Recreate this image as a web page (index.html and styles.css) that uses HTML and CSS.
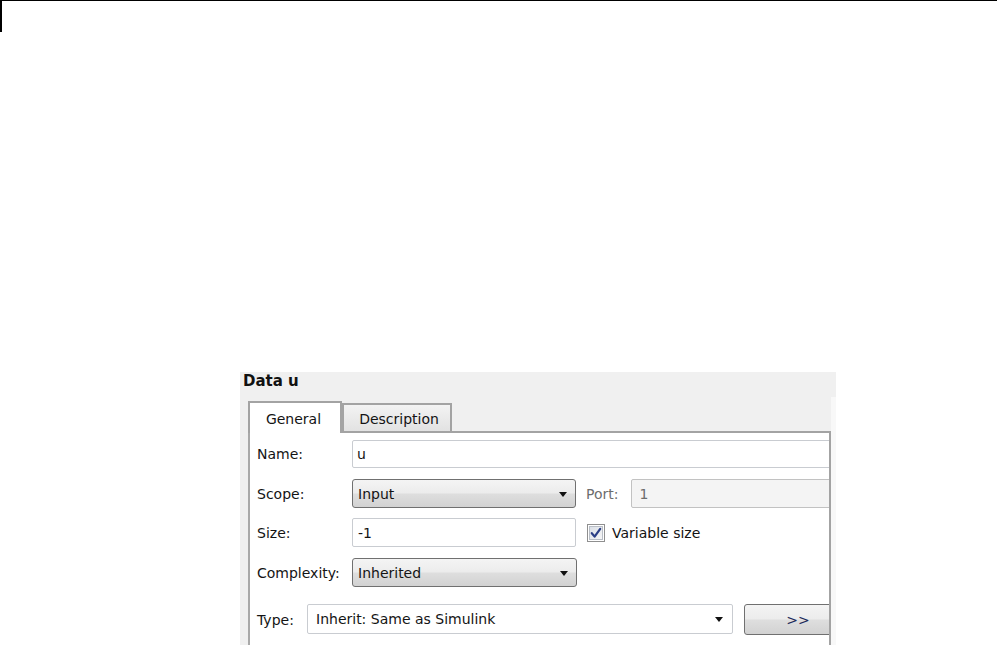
FILE: index.html
```html
<!DOCTYPE html>
<html>
<head>
<meta charset="utf-8">
<link rel="stylesheet" href="styles.css">
</head>
<body>
<div class="frame"></div>
<div class="dialog">
  <div class="title">Data u</div>
  <div class="content">
    <div class="main">
      <div class="tabs">
        <div class="tab active">General</div>
        <div class="tab">Description</div>
      </div>
      <div class="pane">
        <div class="row r-name">
          <span class="label">Name:</span>
          <div class="input wide">u</div>
        </div>
        <div class="row r-scope">
          <span class="label">Scope:</span>
          <div class="select">Input<span class="arrow"></span></div>
          <span class="port-label">Port:</span>
          <div class="input disabled">1</div>
        </div>
        <div class="row r-size">
          <span class="label">Size:</span>
          <div class="input short">-1</div>
          <svg class="check" width="18" height="18" viewBox="0 0 18 18">
            <defs>
              <linearGradient id="cb" x1="0" y1="0" x2="1" y2="1">
                <stop offset="0" stop-color="#d9dee6"/>
                <stop offset="1" stop-color="#f7f7f7"/>
              </linearGradient>
            </defs>
            <rect x="0.5" y="0.5" width="17" height="17" fill="#fff" stroke="#8f8f8f"/>
            <rect x="2.5" y="2.5" width="13" height="13" fill="url(#cb)" stroke="#b9bec6"/>
            <path d="M4.8 9.2 L7.6 12.6 L13.2 4.8" fill="none" stroke="#2b3f86" stroke-width="2.2" stroke-linejoin="round" stroke-linecap="round"/>
          </svg>
          <span class="check-label">Variable size</span>
        </div>
        <div class="row r-complex">
          <span class="label">Complexity:</span>
          <div class="select">Inherited<span class="arrow"></span></div>
        </div>
        <div class="row r-type">
          <span class="label type-label">Type:</span>
          <div class="combo">Inherit: Same as Simulink<span class="arrow"></span></div>
          <div class="button">&gt;&gt;</div>
        </div>
      </div>
    </div>
    <div class="strip"></div>
  </div>
</div>
</body>
</html>
```
FILE: styles.css
```css
html, body {
  margin: 0;
  padding: 0;
  background: #ffffff;
}
body {
  width: 997px;
  height: 645px;
  overflow: hidden;
  font-family: "DejaVu Sans", Verdana, sans-serif;
  font-size: 14px;
  color: #141414;
}
.frame {
  height: 31px;
  border-top: 1px solid #000;
  border-left: 2px solid #000;
}
.dialog {
  margin: 340px 0 0 240px;
  width: 596px;
  height: 273px;
  background: #f0f0f0;
  display: flex;
  flex-direction: column;
  overflow: hidden;
}
.title {
  height: 25px;
  padding-left: 3px;
  font-weight: bold;
  font-size: 15px;
  line-height: 18px;
  color: #111;
}
.content {
  flex: 1;
  display: flex;
}
.main {
  width: 591px;
  display: flex;
  flex-direction: column;
}
.strip {
  width: 5px;
  background: #f8f8f8;
}
.tabs {
  height: 34px;
  display: flex;
  align-items: flex-end;
  padding-left: 8px;
  position: relative;
  z-index: 1;
}
.tab {
  box-sizing: border-box;
  border: 2px solid #a3a3a3;
  border-bottom: none;
  display: flex;
  align-items: center;
  justify-content: center;
}
.tab.active {
  width: 94px;
  height: 32px;
  margin-bottom: -2px;
  background: #ffffff;
  padding-top: 1px;
  padding-right: 3px;
}
.tab:not(.active) {
  width: 110px;
  height: 28px;
  margin-left: 0;
  background: linear-gradient(#f3f3f3, #e2e2e2);
  padding-top: 2px;
  padding-left: 4px;
}
.pane {
  flex: 1;
  margin-left: 8px;
  background: #fff;
  border-top: 2px solid #a3a3a3;
  border-left: 2px solid #a9a9a9;
  border-right: 2px solid #a3a3a3;
  overflow: hidden;
  padding: 7px 0 0 7px;
  display: flex;
  flex-direction: column;
}
.row {
  display: flex;
  align-items: center;
  white-space: nowrap;
  flex: none;
}
.r-name { height: 28px; }
.r-scope { height: 29px; margin-top: 11px; }
.r-size { height: 29px; margin-top: 10px; }
.r-complex { height: 29px; margin-top: 11px; }
.r-type { height: 31px; margin-top: 17px; }
.label {
  width: 95px;
  flex: none;
}
.type-label {
  width: 50px;
}
.input {
  box-sizing: border-box;
  height: 100%;
  border: 1px solid #c9ccd1;
  border-radius: 2px;
  background: #fff;
  padding-left: 4px;
  display: flex;
  align-items: center;
  flex: none;
}
.input.wide { width: 520px; }
.input.short { width: 224px; padding-left: 5px; }
.input.disabled {
  width: 240px;
  margin-left: 13px;
  background: #f4f4f4;
  border-color: #c2c2c2;
  color: #6d6d6d;
  padding-left: 7px;
}
.select {
  box-sizing: border-box;
  width: 224px;
  height: 100%;
  border: 1px solid #707070;
  border-radius: 3px;
  background: linear-gradient(#f4f4f4, #ececec 48%, #dedede 52%, #d2d2d2);
  padding-left: 5px;
  display: flex;
  align-items: center;
  position: relative;
  flex: none;
}
.r-complex .select { width: 225px; }
.arrow {
  position: absolute;
  right: 8px;
  top: 50%;
  margin-top: -2px;
  width: 0;
  height: 0;
  border-left: 4.5px solid transparent;
  border-right: 4.5px solid transparent;
  border-top: 5px solid #111;
}
.port-label {
  margin-left: 10px;
  color: #6d6d6d;
}
.check {
  margin-left: 11px;
  flex: none;
}
.check-label {
  margin-left: 7px;
}
.combo {
  box-sizing: border-box;
  width: 426px;
  height: 30px;
  border: 1px solid #c9ccd1;
  border-radius: 2px;
  background: #fff;
  padding-left: 8px;
  display: flex;
  align-items: center;
  position: relative;
  flex: none;
  align-self: flex-start;
}
.combo .arrow { right: 9px; }
.button {
  box-sizing: border-box;
  width: 108px;
  height: 31px;
  margin-left: 11px;
  border: 1px solid #707070;
  border-radius: 3px;
  background: linear-gradient(#f4f4f4, #ececec 48%, #dedede 52%, #d2d2d2);
  display: flex;
  align-items: center;
  justify-content: center;
  flex: none;
  color: #1d2a5a;
}
```
